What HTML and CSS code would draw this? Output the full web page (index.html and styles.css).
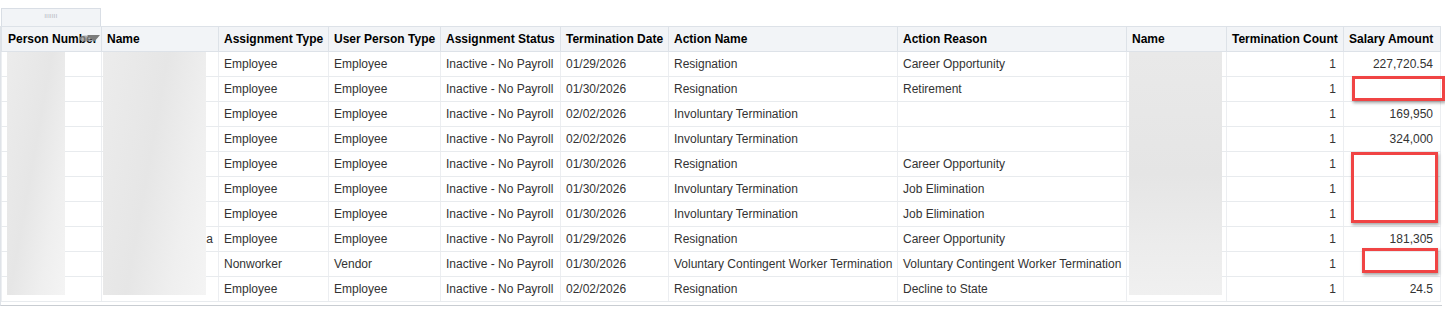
FILE: index.html
```html
<!DOCTYPE html>
<html>
<head>
<meta charset="utf-8">
<link rel="stylesheet" href="styles.css">
</head>
<body>
<div class="page">
  <div class="tab"><span class="grip">IIIIIII</span></div>
  <div class="frame">
    <div class="grid-wrap">
      <table class="grid">
        <colgroup>
          <col style="width:100px"><col style="width:117px"><col style="width:110px"><col style="width:112px"><col style="width:120px"><col style="width:108px"><col style="width:229px"><col style="width:229px"><col style="width:100px"><col style="width:117px"><col style="width:97px">
        </colgroup>
        <thead>
          <tr>
            <th class="sorted">Person Number<svg class="sort-icon" width="22" height="9" viewBox="0 0 22 9"><ellipse cx="6" cy="4.5" rx="6" ry="3" fill="#9a9a9a" opacity="0.75"/><path d="M8 1 L21 1 L15 8 Z" fill="#7b7b7b"/></svg></th>
            <th>Name</th>
            <th>Assignment Type</th>
            <th>User Person Type</th>
            <th>Assignment Status</th>
            <th>Termination Date</th>
            <th>Action Name</th>
            <th>Action Reason</th>
            <th>Name</th>
            <th>Termination Count</th>
            <th>Salary Amount</th>
          </tr>
        </thead>
        <tbody>
          <tr><td></td><td></td><td>Employee</td><td>Employee</td><td>Inactive - No Payroll</td><td>01/29/2026</td><td>Resignation</td><td>Career Opportunity</td><td></td><td class="num">1</td><td class="num">227,720.54</td></tr>
          <tr><td></td><td></td><td>Employee</td><td>Employee</td><td>Inactive - No Payroll</td><td>01/30/2026</td><td>Resignation</td><td>Retirement</td><td></td><td class="num">1</td><td class="num"></td></tr>
          <tr><td></td><td></td><td>Employee</td><td>Employee</td><td>Inactive - No Payroll</td><td>02/02/2026</td><td>Involuntary Termination</td><td></td><td></td><td class="num">1</td><td class="num">169,950</td></tr>
          <tr><td></td><td></td><td>Employee</td><td>Employee</td><td>Inactive - No Payroll</td><td>02/02/2026</td><td>Involuntary Termination</td><td></td><td></td><td class="num">1</td><td class="num">324,000</td></tr>
          <tr><td></td><td></td><td>Employee</td><td>Employee</td><td>Inactive - No Payroll</td><td>01/30/2026</td><td>Resignation</td><td>Career Opportunity</td><td></td><td class="num">1</td><td class="num"></td></tr>
          <tr><td></td><td></td><td>Employee</td><td>Employee</td><td>Inactive - No Payroll</td><td>01/30/2026</td><td>Involuntary Termination</td><td>Job Elimination</td><td></td><td class="num">1</td><td class="num"></td></tr>
          <tr><td></td><td></td><td>Employee</td><td>Employee</td><td>Inactive - No Payroll</td><td>01/30/2026</td><td>Involuntary Termination</td><td>Job Elimination</td><td></td><td class="num">1</td><td class="num"></td></tr>
          <tr><td></td><td class="num trail">a</td><td>Employee</td><td>Employee</td><td>Inactive - No Payroll</td><td>01/29/2026</td><td>Resignation</td><td>Career Opportunity</td><td></td><td class="num">1</td><td class="num">181,305</td></tr>
          <tr><td></td><td></td><td>Nonworker</td><td>Vendor</td><td>Inactive - No Payroll</td><td>01/30/2026</td><td>Voluntary Contingent Worker Termination</td><td>Voluntary Contingent Worker Termination</td><td></td><td class="num">1</td><td class="num"></td></tr>
          <tr><td></td><td></td><td>Employee</td><td>Employee</td><td>Inactive - No Payroll</td><td>02/02/2026</td><td>Resignation</td><td>Decline to State</td><td></td><td class="num">1</td><td class="num">24.5</td></tr>
        </tbody>
      </table>
      <div class="blur blur-person"></div>
      <div class="blur blur-name"></div>
      <div class="blur blur-name2"></div>
      <div class="mark mark-1"></div>
      <div class="mark mark-2"></div>
      <div class="mark mark-3"></div>
    </div>
  </div>
</div>
</body>
</html>
```

FILE: styles.css
```css
html, body {
  margin: 0;
  padding: 0;
  background: #ffffff;
}

.page {
  padding: 8px 0 0 0;
  font-family: Arial, "Liberation Sans", sans-serif;
  font-size: 12px;
  color: #333333;
}

.tab {
  margin-left: 1px;
  width: 98px;
  height: 17px;
  background: #f2f4f7;
  border: 1px solid #d9dee5;
  border-bottom: none;
  display: flex;
  align-items: center;
  justify-content: center;
}

.grip {
  font-size: 5px;
  letter-spacing: 0.5px;
  color: #9aa3ad;
  line-height: 1;
  margin-top: -2px;
}

.frame {
  width: 1441px;
  border-left: 1px solid #dfe3e8;
  border-bottom: 1px solid #c9cdd2;
  padding-bottom: 3px;
}

.grid-wrap {
  position: relative;
  width: 1439px;
}

.grid {
  border-collapse: collapse;
  table-layout: fixed;
  width: 1439px;
  border: 1px solid #dde2e8;
}

.grid th,
.grid td {
  height: 24px;
  padding: 0 5px;
  white-space: nowrap;
  overflow: hidden;
  text-align: left;
  vertical-align: middle;
  line-height: 14px;
}

.grid th {
  background: #f2f4f7;
  color: #000000;
  font-weight: bold;
  border: 1px solid #dde2e8;
  border-top: none;
}

.grid td {
  border-left: 1px solid #eceef1;
  border-right: 1px solid #eceef1;
  border-bottom: 1px solid #e8ebee;
  color: #333333;
}

.grid td.num {
  text-align: right;
  padding-right: 7px;
}

.grid td.trail {
  padding-right: 5px;
}

.grid th.sorted {
  position: relative;
  padding-left: 6px;
}

.sort-icon {
  position: absolute;
  left: 77px;
  top: 7px;
}

.blur {
  position: absolute;
  top: 26px;
  height: 243px;
  background: linear-gradient(100deg, #ececec 0%, #e6e6e6 45%, #efefef 75%, #f4f4f4 100%);
}

.blur-person {
  left: 6px;
  width: 58px;
}

.blur-name {
  left: 102px;
  width: 103px;
}

.blur-name2 {
  left: 1128px;
  width: 93px;
  background: linear-gradient(180deg, #e9e9e9 0%, #e5e5e5 50%, #ececec 80%, #f0f0f0 100%);
}

.mark {
  position: absolute;
  border: 3px solid #f04444;
  box-shadow: 1px 2px 3px rgba(0, 0, 0, 0.35);
  box-sizing: border-box;
}

.mark-1 {
  left: 1351px;
  top: 50px;
  width: 93px;
  height: 25px;
}

.mark-2 {
  left: 1350px;
  top: 126px;
  width: 87px;
  height: 71px;
}

.mark-3 {
  left: 1361px;
  top: 222px;
  width: 76px;
  height: 25px;
}
```
